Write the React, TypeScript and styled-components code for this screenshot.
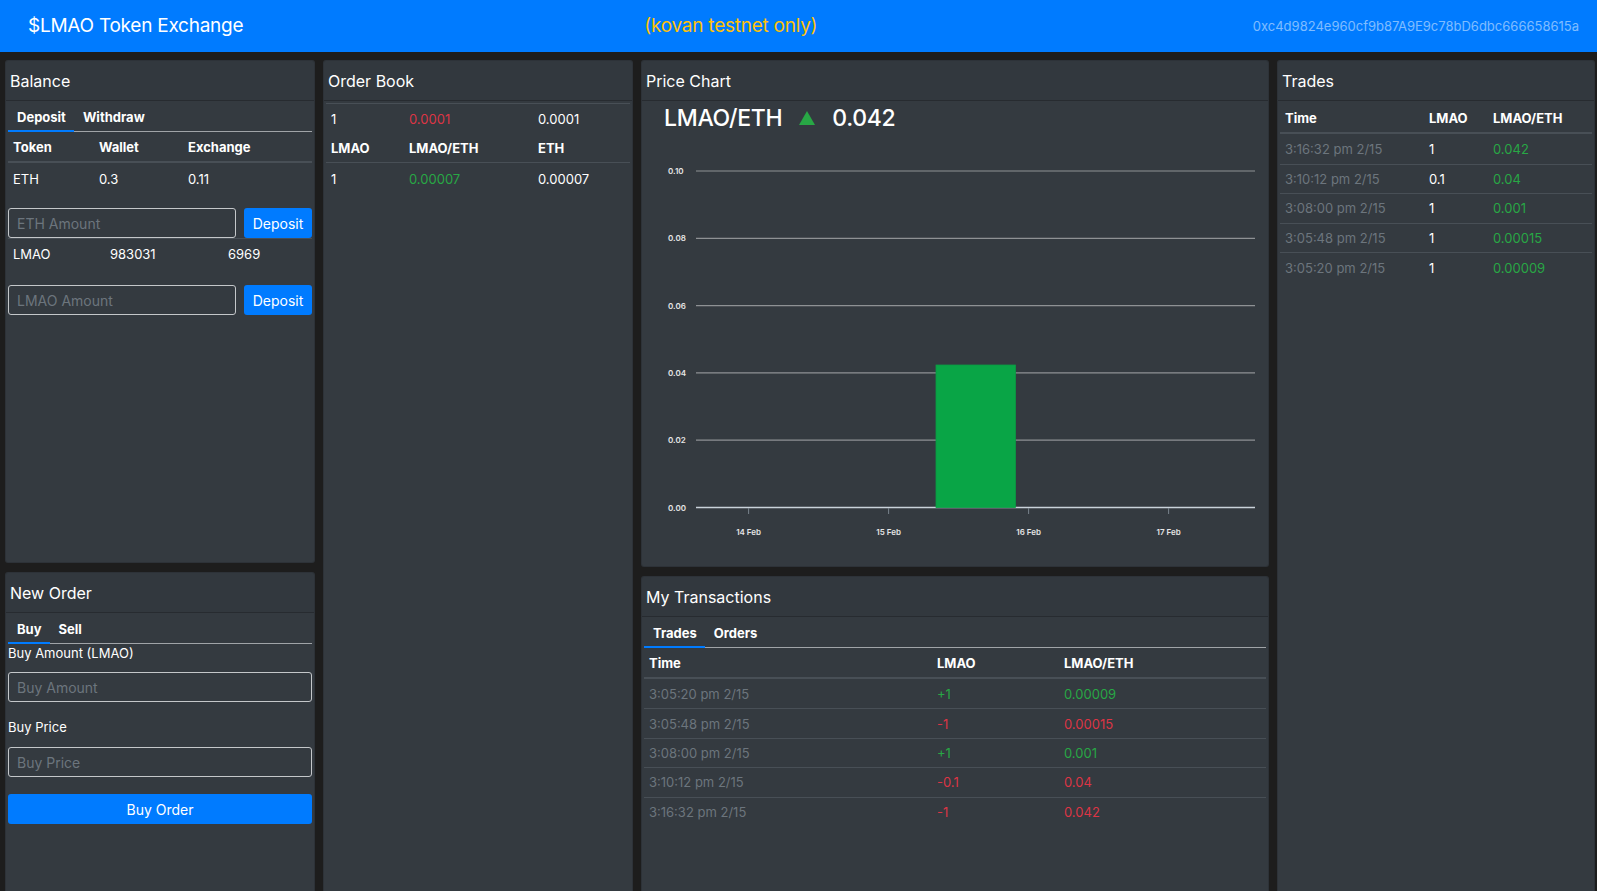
import React from "react";
import styled, { createGlobalStyle } from "styled-components";

const GlobalStyle = createGlobalStyle`
  * { box-sizing: border-box; }
  html, body {
    margin: 0;
    padding: 0;
    background: #1d1d1d;
    overflow: hidden;
  }
  body {
    font-family: Inter, "Liberation Sans", sans-serif;
    color: #fff;
  }
`;

type Tone = "red" | "green" | "muted" | "white";

const toneColor = (t?: Tone) =>
  t === "red" ? "#dc3545" : t === "green" ? "#28a745" : t === "muted" ? "#6c757d" : "#fff";

const trades = [
  { time: "3:16:32 pm 2/15", amount: "1", price: "0.042" },
  { time: "3:10:12 pm 2/15", amount: "0.1", price: "0.04" },
  { time: "3:08:00 pm 2/15", amount: "1", price: "0.001" },
  { time: "3:05:48 pm 2/15", amount: "1", price: "0.00015" },
  { time: "3:05:20 pm 2/15", amount: "1", price: "0.00009" },
];

const myTrades: { time: string; amount: string; price: string; tone: Tone }[] = [
  { time: "3:05:20 pm 2/15", amount: "+1", price: "0.00009", tone: "green" },
  { time: "3:05:48 pm 2/15", amount: "-1", price: "0.00015", tone: "red" },
  { time: "3:08:00 pm 2/15", amount: "+1", price: "0.001", tone: "green" },
  { time: "3:10:12 pm 2/15", amount: "-0.1", price: "0.04", tone: "red" },
  { time: "3:16:32 pm 2/15", amount: "-1", price: "0.042", tone: "red" },
];

const gridValues = ["0.10", "0.08", "0.06", "0.04", "0.02", "0.00"];
const ticks = [
  { x: 104.6, label: "14 Feb" },
  { x: 244.6, label: "15 Feb" },
  { x: 384.6, label: "16 Feb" },
  { x: 524.6, label: "17 Feb" },
];

const PriceChart = () => (
  <ChartSvg width="622" height="410" viewBox="0 0 622 410">
    {gridValues.map((v, i) => {
      const y = 31 + i * 67.3;
      const axis = i === gridValues.length - 1;
      return (
        <g key={v}>
          <line
            x1="52"
            x2="611"
            y1={y}
            y2={y}
            stroke={axis ? "#c9d2da" : "#8e9194"}
            strokeWidth={axis ? 1.6 : 1.2}
          />
          <text x="24" y={y + 3} fontSize="8" fontWeight="600" fill="#e6e6e6">
            {v}
          </text>
        </g>
      );
    })}
    <rect x="292" y="225" width="79.5" height="142.5" fill="#09a546" stroke="#0b9a43" strokeWidth="0.8" />
    {ticks.map((t) => (
      <g key={t.label}>
        <line x1={t.x} x2={t.x} y1="368" y2="374" stroke="#78838c" strokeWidth="1" />
        <text x={t.x} y="395" fontSize="8" fontWeight="600" fill="#e6e6e6" textAnchor="middle">
          {t.label}
        </text>
      </g>
    ))}
  </ChartSvg>
);

export default function App() {
  return (
    <Page>
      <GlobalStyle />
      <Navbar>
        <Brand>$LMAO Token Exchange</Brand>
        <Network>(kovan testnet only)</Network>
        <Account>0xc4d9824e960cf9b87A9E9c78bD6dbc666658615a</Account>
      </Navbar>

      <Content>
        <Split>
          <Card $height={503}>
            <CardHeader>Balance</CardHeader>
            <CardBody>
              <Tabs>
                <Tab $active>Deposit</Tab>
                <Tab>Withdraw</Tab>
              </Tabs>
              <HeadRow $cols="86px 89px 1fr" $h={31}>
                <Cell>Token</Cell>
                <Cell>Wallet</Cell>
                <Cell>Exchange</Cell>
              </HeadRow>
              <Row $cols="86px 89px 1fr">
                <Cell>ETH</Cell>
                <Cell>0.3</Cell>
                <Cell>0.11</Cell>
              </Row>
              <InlineForm $mt={15}>
                <Input placeholder="ETH Amount" />
                <Button>Deposit</Button>
              </InlineForm>
              <Row $cols="97px 118px 1fr" $line>
                <Cell>LMAO</Cell>
                <Cell>983031</Cell>
                <Cell>6969</Cell>
              </Row>
              <InlineForm $mt={17}>
                <Input placeholder="LMAO Amount" />
                <Button>Deposit</Button>
              </InlineForm>
            </CardBody>
          </Card>

          <Card>
            <CardHeader>New Order</CardHeader>
            <CardBody>
              <Tabs>
                <Tab $active>Buy</Tab>
                <Tab>Sell</Tab>
              </Tabs>
              <Label $mt={0}>Buy Amount (LMAO)</Label>
              <Input $mt={9} placeholder="Buy Amount" />
              <Label $mt={16}>Buy Price</Label>
              <Input $mt={10} placeholder="Buy Price" />
              <WideButton>Buy Order</WideButton>
            </CardBody>
          </Card>
        </Split>

        <Card>
          <CardHeader>Order Book</CardHeader>
          <CardBody>
            <Row $cols="78px 129px 1fr" $line>
              <Cell>1</Cell>
              <Cell $tone="red">0.0001</Cell>
              <Cell>0.0001</Cell>
            </Row>
            <HeadRow $cols="78px 129px 1fr" $thin>
              <Cell>LMAO</Cell>
              <Cell>LMAO/ETH</Cell>
              <Cell>ETH</Cell>
            </HeadRow>
            <Row $cols="78px 129px 1fr">
              <Cell>1</Cell>
              <Cell $tone="green">0.00007</Cell>
              <Cell>0.00007</Cell>
            </Row>
          </CardBody>
        </Card>

        <Split>
          <Card $height={507}>
            <CardHeader>Price Chart</CardHeader>
            <CardBody>
              <PriceLine>
                <span>LMAO/ETH</span>
                <svg width="16" height="14" viewBox="0 0 16 14">
                  <polygon points="8,0 16,14 0,14" fill="#28a745" />
                </svg>
                <span>0.042</span>
              </PriceLine>
              <PriceChart />
            </CardBody>
          </Card>

          <Card>
            <CardHeader>My Transactions</CardHeader>
            <CardBody>
              <Tabs>
                <Tab $active>Trades</Tab>
                <Tab>Orders</Tab>
              </Tabs>
              <HeadRow $cols="288px 127px 1fr" $h={31}>
                <Cell>Time</Cell>
                <Cell>LMAO</Cell>
                <Cell>LMAO/ETH</Cell>
              </HeadRow>
              {myTrades.map((t, i) => (
                <Row key={t.time} $cols="288px 127px 1fr" $line={i > 0} $h={29.4}>
                  <Cell $tone="muted">{t.time}</Cell>
                  <Cell $tone={t.tone}>{t.amount}</Cell>
                  <Cell $tone={t.tone}>{t.price}</Cell>
                </Row>
              ))}
            </CardBody>
          </Card>
        </Split>

        <Card>
          <CardHeader>Trades</CardHeader>
          <CardBody>
            <HeadRow $cols="144px 64px 1fr" $h={31}>
              <Cell>Time</Cell>
              <Cell>LMAO</Cell>
              <Cell>LMAO/ETH</Cell>
            </HeadRow>
            {trades.map((t, i) => (
              <Row key={t.time} $cols="144px 64px 1fr" $line={i > 0} $h={29.6}>
                <Cell $tone="muted">{t.time}</Cell>
                <Cell>{t.amount}</Cell>
                <Cell $tone="green">{t.price}</Cell>
              </Row>
            ))}
          </CardBody>
        </Card>
      </Content>
    </Page>
  );
}

const Page = styled.div`
  height: 891px;
  display: flex;
  flex-direction: column;
  overflow: hidden;
`;

const Navbar = styled.nav`
  flex: none;
  height: 52px;
  display: flex;
  align-items: center;
  padding: 0 18px 1px 28px;
  background: #007bff;
`;

const Brand = styled.div`
  font-size: 19px;
  letter-spacing: -0.25px;
  color: #fff;
`;

const Network = styled.div`
  margin-left: 401px;
  font-size: 19px;
  letter-spacing: -0.25px;
  color: #ffc107;
`;

const Account = styled.div`
  margin-left: auto;
  font-size: 13px;
  color: rgba(255, 255, 255, 0.5);
`;

const Content = styled.main`
  flex: none;
  display: grid;
  grid-template-columns: 310px 310px 628px 318px;
  column-gap: 8px;
  height: 870px;
  padding: 8px 0 0 5px;
`;

const Split = styled.div`
  display: flex;
  flex-direction: column;
  gap: 9px;
  min-height: 0;
`;

const Card = styled.section<{ $height?: number }>`
  display: flex;
  flex-direction: column;
  background: #343a40;
  border: 1px solid rgba(0, 0, 0, 0.125);
  border-radius: 3px;
  ${(p) => (p.$height ? `height: ${p.$height}px; flex: none;` : `flex: 1;`)}
`;

const CardHeader = styled.header`
  flex: none;
  height: 40px;
  display: flex;
  align-items: center;
  padding: 0 4px;
  font-size: 16px;
  background: rgba(0, 0, 0, 0.03);
  border-bottom: 1px solid rgba(0, 0, 0, 0.22);
`;

const CardBody = styled.div`
  flex: 1;
  display: flex;
  flex-direction: column;
  padding: 2px 2px;
`;

const Tabs = styled.div`
  flex: none;
  display: flex;
  height: 29px;
  border-bottom: 1px solid #a0a4a8;
`;

const Tab = styled.div<{ $active?: boolean }>`
  display: flex;
  align-items: center;
  padding: 0 8px 0 9px;
  margin-bottom: -1px;
  font-size: 13px;
  font-weight: 700;
  border-bottom: 2px solid ${(p) => (p.$active ? "#007bff" : "transparent")};
`;

const Row = styled.div<{ $cols: string; $line?: boolean; $h?: number }>`
  flex: none;
  display: grid;
  grid-template-columns: ${(p) => p.$cols};
  align-items: center;
  height: ${(p) => p.$h ?? 30}px;
  font-size: 13px;
  border-top: 1px solid ${(p) => (p.$line ? "#484f56" : "transparent")};
`;

const HeadRow = styled.div<{ $cols: string; $thin?: boolean; $h?: number }>`
  flex: none;
  display: grid;
  grid-template-columns: ${(p) => p.$cols};
  align-items: center;
  height: ${(p) => p.$h ?? (p.$thin ? 30 : 32)}px;
  font-size: 13px;
  font-weight: 700;
  border-bottom: ${(p) => (p.$thin ? 1 : 2)}px solid #484f56;
`;

const Cell = styled.div<{ $tone?: Tone }>`
  padding-left: 5px;
  color: ${(p) => toneColor(p.$tone)};
  white-space: nowrap;
`;

const InlineForm = styled.div<{ $mt: number }>`
  flex: none;
  display: grid;
  grid-template-columns: 1fr 68px;
  column-gap: 8px;
  height: 30px;
  margin-top: ${(p) => p.$mt}px;
`;

const Input = styled.input<{ $mt?: number }>`
  flex: none;
  height: 30px;
  width: 100%;
  margin: ${(p) => p.$mt ?? 0}px 0 0;
  padding: 0 8px;
  font-family: inherit;
  font-size: 14px;
  color: #fff;
  background: transparent;
  border: 1px solid #c4c7ca;
  border-radius: 3px;
  outline: none;

  &::placeholder {
    color: #6c757d;
  }
`;

const Button = styled.button`
  height: 30px;
  padding: 0;
  font-family: inherit;
  font-size: 14px;
  color: #fff;
  background: #007bff;
  border: none;
  border-radius: 3px;
`;

const WideButton = styled(Button)`
  flex: none;
  width: 100%;
  margin-top: 17px;
`;

const Label = styled.div<{ $mt: number }>`
  flex: none;
  margin-top: ${(p) => p.$mt}px;
  font-size: 13px;
  line-height: 19px;
`;

const PriceLine = styled.div`
  flex: none;
  display: flex;
  align-items: center;
  gap: 17px;
  height: 30px;
  padding-left: 20px;
  font-size: 23px;
  letter-spacing: -0.3px;
  font-weight: 500;
`;

const ChartSvg = styled.svg`
  flex: none;
  display: block;
  margin-top: 7px;
`;
